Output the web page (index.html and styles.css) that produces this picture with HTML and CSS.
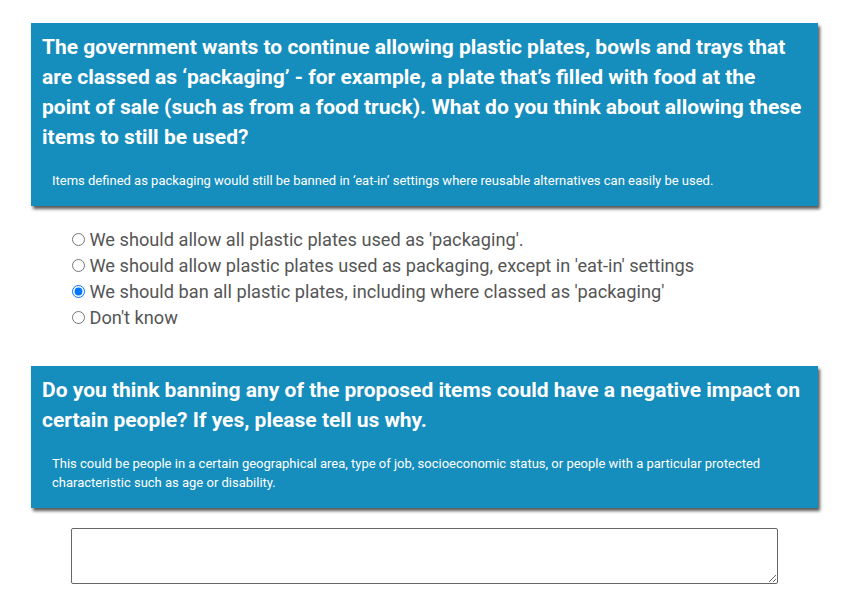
FILE: index.html
```html
<!DOCTYPE html>
<html lang="en">
<head>
<meta charset="utf-8">
<title>Consultation</title>
<link rel="stylesheet" href="styles.css">
</head>
<body>
<main class="page">
  <section class="question">
    <div class="qbox">
      <h2 class="qtitle">The government wants to continue allowing plastic plates, bowls and trays that are classed as ‘packaging’ - for example, a plate that’s filled with food at the point of sale (such as from a food truck). What do you think about allowing these items to still be used?</h2>
      <p class="qhint">Items defined as packaging would still be banned in ‘eat-in’ settings where reusable alternatives can easily be used.</p>
    </div>
    <div class="options">
      <label class="option"><input type="radio" name="q1"> We should allow all plastic plates used as 'packaging'.</label>
      <label class="option"><input type="radio" name="q1"> We should allow plastic plates used as packaging, except in 'eat-in' settings</label>
      <label class="option"><input type="radio" name="q1" checked> We should ban all plastic plates, including where classed as 'packaging'</label>
      <label class="option"><input type="radio" name="q1"> Don't know</label>
    </div>
  </section>
  <section class="question second">
    <div class="qbox">
      <h2 class="qtitle">Do you think banning any of the proposed items could have a negative impact on certain people? If yes, please tell us why.</h2>
      <p class="qhint">This could be people in a certain geographical area, type of job, socioeconomic status, or people with a particular protected characteristic such as age or disability.</p>
    </div>
    <div class="answer">
      <textarea class="textbox"></textarea>
    </div>
  </section>
</main>
</body>
</html>
```

FILE: styles.css
```css
html, body {
  margin: 0;
  padding: 0;
  background: #ffffff;
}
body {
  font-family: Roboto, "Liberation Sans", Arial, sans-serif;
}
.page {
  width: 787px;
  margin-left: 31px;
  padding-top: 23px;
}
.qbox {
  background: #158dbd;
  color: #ffffff;
  padding: 9px 11px 16px;
  box-shadow: 2px 3px 3px rgba(0, 0, 0, 0.65);
}
.qtitle {
  margin: 0;
  font-size: 21px;
  line-height: 30px;
  font-weight: 700;
}
.qhint {
  margin: 19px 0 0 10px;
  font-size: 13px;
  line-height: 19px;
}
.options {
  display: flex;
  flex-direction: column;
  padding: 21px 0 0 36px;
}
.option {
  font-size: 18.2px;
  line-height: 26px;
  color: #555555;
}
.option input {
  margin: 3px 0 0 5px;
}
.second {
  margin-top: 35px;
}
.answer {
  padding: 20px 0 0 40px;
}
.textbox {
  display: block;
  box-sizing: border-box;
  width: 707px;
  height: 56px;
  margin: 0;
  border: 1px solid #666666;
  border-radius: 2px;
}
```
